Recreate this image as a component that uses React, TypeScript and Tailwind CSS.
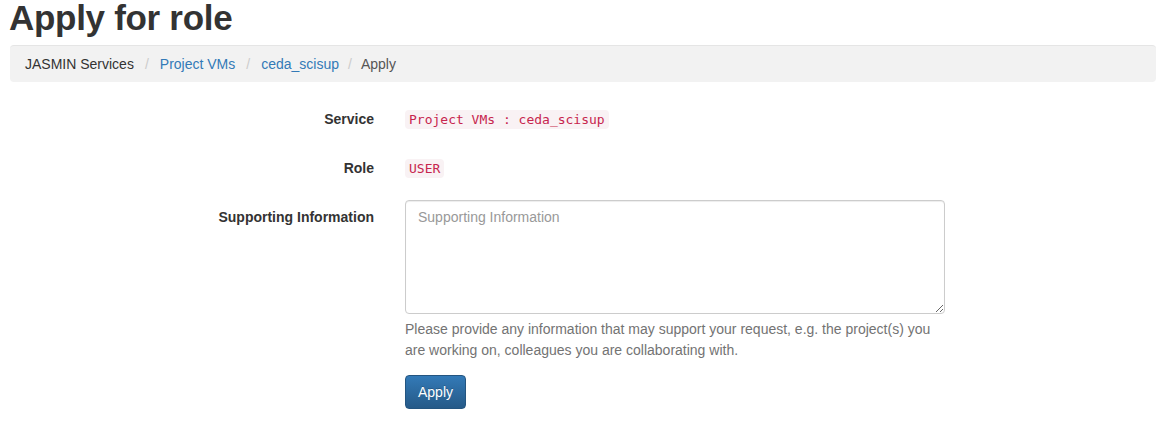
export default function App() {
  return (
    <div className="min-h-[423px] bg-white text-[14px] leading-[20px] text-[#333] [font-family:'Liberation_Sans',Arial,sans-serif]">
      <div className="px-[10px]">
        <h1 className="-ml-[1px] text-[35px] leading-[35px] font-bold tracking-[-0.3px] text-[#333] mb-[10px]">
          Apply for role
        </h1>
        <ol className="flex items-center rounded-[4px] bg-[#f2f2f2] px-[15px] py-[8px] border-t border-[#e5e5e5] h-[37px]">
          <li className="text-[#333]">JASMIN Services</li>
          <li className="px-[11px] text-[#ccc]">/</li>
          <li className="text-[#337ab7]">Project VMs</li>
          <li className="px-[11px] text-[#ccc]">/</li>
          <li className="text-[#337ab7]">ceda_scisup</li>
          <li className="px-[9px] text-[#ccc]">/</li>
          <li className="text-[#555]">Apply</li>
        </ol>

        <form className="mt-[20px] grid grid-cols-[380px_570px] gap-y-[15px]">
          <div className="pr-[16px] pt-[7px] text-right font-bold">Service</div>
          <div className="px-[15px] pt-[7px] h-[34px]">
            <code className="rounded-[4px] bg-[#f9f2f4] px-[4px] py-[2px] text-[13px] text-[#c7254e] [font-family:'DejaVu_Sans_Mono',monospace]">
              Project VMs : ceda_scisup
            </code>
          </div>

          <div className="pr-[16px] pt-[7px] text-right font-bold">Role</div>
          <div className="px-[15px] pt-[7px] h-[34px]">
            <code className="rounded-[4px] bg-[#f9f2f4] px-[4px] py-[2px] text-[13px] text-[#c7254e] [font-family:'DejaVu_Sans_Mono',monospace]">
              USER
            </code>
          </div>

          <div className="pr-[16px] pt-[7px] text-right font-bold">Supporting Information</div>
          <div className="px-[15px]">
            <textarea
              placeholder="Supporting Information"
              className="block h-[114px] w-full rounded-[4px] border border-[#ccc] px-[12px] py-[6px] text-[14px] text-[#555] shadow-[inset_0_1px_1px_rgba(0,0,0,0.075)] outline-none placeholder:text-[#999] [font-family:'Liberation_Sans',Arial,sans-serif]"
            />
            <p className="mt-[5px] text-[#737373] leading-[21px]">
              Please provide any information that may support your request, e.g. the project(s) you are working on, colleagues you are collaborating with.
            </p>
            <button
              type="button"
              className="mt-[14px] h-[34px] rounded-[4px] border border-[#245580] bg-gradient-to-b from-[#337ab7] to-[#265a88] px-[12px] text-[14px] text-white [text-shadow:0_-1px_0_rgba(0,0,0,0.2)]"
            >
              Apply
            </button>
          </div>
        </form>
      </div>
    </div>
  );
}
